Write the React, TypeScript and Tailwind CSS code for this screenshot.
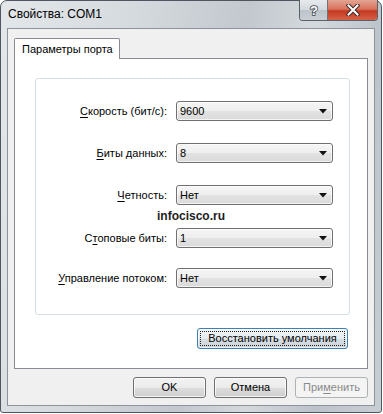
import React from 'react';

const font = {fontFamily: '"Liberation Sans", Arial, sans-serif'};

function Mn({children}: {children: React.ReactNode}) {
    return <span className="underline underline-offset-[2px] decoration-[1px]">{children}</span>;
}

function Combo({value}: {value: string}) {
    return (
        <div className="ml-[9px] w-[157px] h-[20px] rounded-[3px] border border-[#707070] bg-[linear-gradient(#f6f6f6_0%,#eeeeee_50%,#e3e3e3_50%,#dadada_100%)] flex items-center pl-[3px] pr-[5px] shadow-[inset_0_0_0_1px_rgba(255,255,255,0.7)]">
            <span className="flex-1 text-[11px] text-black leading-none">{value}</span>
            <svg width="8" height="5" viewBox="0 0 8 5">
                <polygon points="0,0 8,0 4,4.5" fill="#111"/>
            </svg>
        </div>
    );
}

function Row({label, value, mt}: {label: React.ReactNode; value: string; mt: string}) {
    return (
        <div className={"flex items-center h-[20px] " + mt}>
            <div className="w-[131px] text-right text-[11px] text-black leading-none">{label}</div>
            <Combo value={value}/>
        </div>
    );
}

function DlgButton({children, disabled}: {children: React.ReactNode; disabled?: boolean}) {
    return (
        <div
            className={
                'w-[73px] h-[21px] rounded-[3px] border flex items-center justify-center text-[11px] leading-none ' +
                (disabled
                    ? 'border-[#adb2b5] bg-[#f4f4f4] text-[#8a8a8a]'
                    : 'border-[#707070] text-black bg-[linear-gradient(#f2f2f2_0%,#ebebeb_50%,#dddddd_50%,#cfcfcf_100%)] shadow-[inset_0_0_0_1px_rgba(255,255,255,0.75)]')
            }
        >
            {children}
        </div>
    );
}

export default function App() {
    return (
        <div className="w-[383px] h-[414px] bg-white" style={font}>
            <div className="w-[382px] h-[413px] flex flex-col rounded-t-[7px] rounded-b-[3px] border border-[#4e5761] bg-[linear-gradient(100deg,#e3e7ea_0%,#d5dade_30%,#c2c8ce_55%,#d4d9dd_70%,#bcc3ca_85%,#c9ced3_100%)]">
                {/* title bar */}
                <div className="h-[27px] flex items-start">
                    <div className="pl-[7px] pt-[7px] text-[12px] leading-none text-black flex-1">Свойства: COM1</div>
                    <div className="flex mr-[3px] -mt-px h-[21px] rounded-b-[4px] border border-[#5a6068] border-t-0 overflow-hidden">
                        <div className="w-[28px] h-full flex items-center justify-center border-r border-[#6e747b] bg-[linear-gradient(#e6e9ec_0%,#d4d9de_50%,#bcc3ca_50%,#c8ced4_100%)]">
                            <svg width="12" height="14" viewBox="0 0 12 14">
                                <text x="6" y="12" textAnchor="middle" fontSize="13" fontWeight="bold" fontFamily="Liberation Sans, Arial, sans-serif" fill="#fff" stroke="#3d434a" strokeWidth="1.6" paintOrder="stroke">?</text>
                            </svg>
                        </div>
                        <div className="w-[49px] h-full flex items-center justify-center bg-[linear-gradient(#e3a593_0%,#d9735d_45%,#c4391f_55%,#d5614a_100%)]">
                            <svg width="14" height="12" viewBox="0 0 14 12">
                                <path d="M2.5 1.5 L11.5 10.5 M11.5 1.5 L2.5 10.5" stroke="#3b2a28" strokeWidth="4" strokeLinecap="square"/>
                                <path d="M2.5 1.5 L11.5 10.5 M11.5 1.5 L2.5 10.5" stroke="#ffffff" strokeWidth="2" strokeLinecap="square"/>
                            </svg>
                        </div>
                    </div>
                </div>

                {/* client */}
                <div className="mx-[6px] mb-[6px] flex-1 border border-[#8d939a] bg-[#f0f0f0] px-[6px] pt-[9px] flex flex-col">
                    <div className="flex">
                        <div className="relative z-10 -mb-px w-[106px] h-[21px] border border-b-0 border-[#898c95] rounded-t-[2px] bg-white pl-[7px] pt-[5px] text-[11px] leading-none text-black">
                            Параметры порта
                        </div>
                    </div>
                    <div className="h-[311px] border border-[#898c95] bg-white pl-[20px] pt-[19px] flex flex-col">
                        <div className="relative w-[315px] h-[237px] border border-[#d5dfe5] rounded-[3px] flex flex-col">
                            <Row mt="mt-[22px]" label={<><Mn>С</Mn>корость (бит/с):</>} value="9600"/>
                            <Row mt="mt-[22px]" label={<><Mn>Б</Mn>иты данных:</>} value="8"/>
                            <Row mt="mt-[22px]" label={<><Mn>Ч</Mn>етность:</>} value="Нет"/>
                            <Row mt="mt-[23px]" label={<>С<Mn>т</Mn>оповые биты:</>} value="1"/>
                            <Row mt="mt-[20px]" label={<><Mn>У</Mn>правление потоком:</>} value="Нет"/>
                            <div className="absolute left-[121px] top-[131px] text-[12px] font-bold leading-none text-[#1e1e1e]">infocisco.ru</div>
                        </div>
                        <div className="mt-[13px] ml-[162px] w-[151px] h-[21px] rounded-[3px] border border-[#3c7fb1] p-[2px] bg-[linear-gradient(#f0f4f7_0%,#e6ebef_50%,#d6dde3_50%,#ccd4da_100%)] shadow-[inset_0_0_0_1px_rgba(255,255,255,0.6)]">
                            <div className="w-full h-full border border-dotted border-[#222] flex items-center justify-center text-[11px] leading-none text-black">
                                Восстановить умолчания
                            </div>
                        </div>
                    </div>
                    <div className="mt-[8px] flex justify-end gap-[8px]">
                        <DlgButton>OK</DlgButton>
                        <DlgButton>Отмена</DlgButton>
                        <DlgButton disabled>При<Mn>м</Mn>енить</DlgButton>
                    </div>
                </div>
            </div>
        </div>
    );
}
